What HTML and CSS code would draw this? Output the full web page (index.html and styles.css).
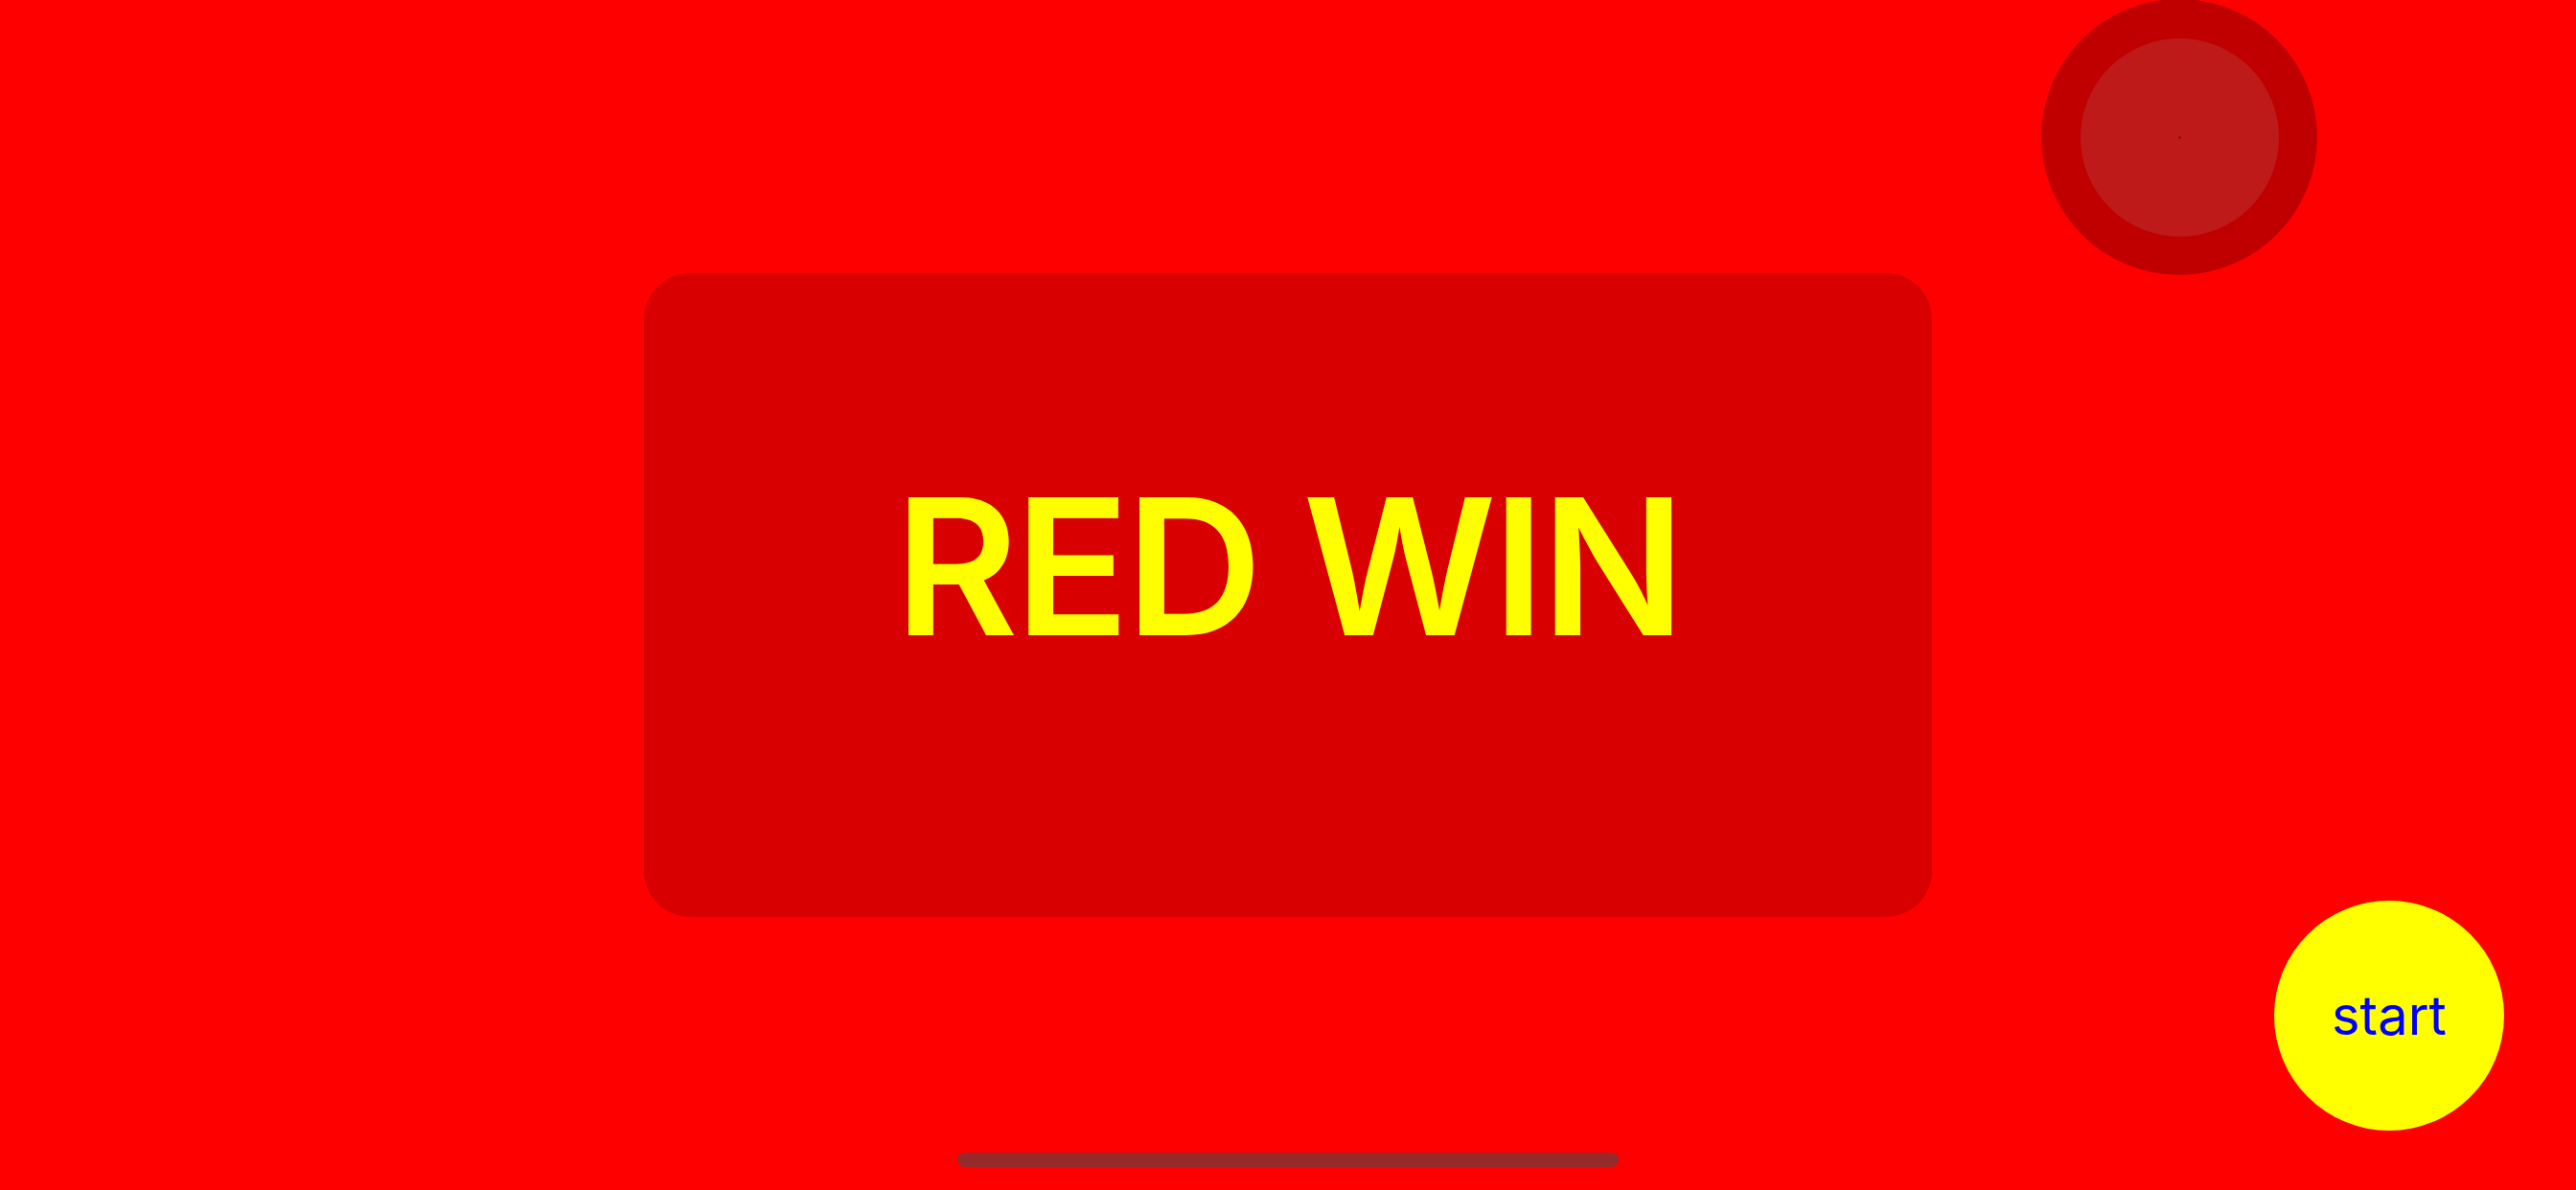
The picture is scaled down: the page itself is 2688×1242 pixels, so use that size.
FILE: index.html
```html
<!DOCTYPE html>
<html lang="en">
<head>
<meta charset="utf-8">
<title>RED WIN</title>
<link rel="stylesheet" href="styles.css">
</head>
<body>
<main class="screen">
  <section class="result-card">
    <h1 class="result-text">RED WIN</h1>
  </section>
  <div class="joystick">
    <div class="joystick-knob"><span class="joystick-dot"></span></div>
  </div>
  <button class="start-button" type="button">start</button>
  <div class="home-indicator"></div>
</main>
</body>
</html>
```
FILE: styles.css
```css
html, body {
  margin: 0;
  padding: 0;
  background: #ff0000;
}

.screen {
  position: relative;
  width: 2688px;
  height: 1242px;
  overflow: hidden;
  background: #ff0000;
  display: flex;
  align-items: center;
  justify-content: center;
  font-family: Inter, "Noto Sans", "Liberation Sans", sans-serif;
}

.result-card {
  width: 1344px;
  height: 672px;
  box-sizing: border-box;
  padding-bottom: 60px;
  border-radius: 48px;
  background: #d80000;
  display: flex;
  align-items: center;
  justify-content: center;
}

.result-text {
  margin: 0;
  font-size: 198px;
  line-height: 1;
  font-weight: 600;
  color: #ffff00;
  letter-spacing: -4px;
  white-space: nowrap;
}

.joystick {
  position: absolute;
  left: 2130px;
  top: -1px;
  width: 288px;
  height: 288px;
  border-radius: 50%;
  background: #c00000;
  display: flex;
  align-items: center;
  justify-content: center;
}

.joystick-knob {
  width: 207px;
  height: 207px;
  border-radius: 50%;
  background: #be1a1a;
  display: flex;
  align-items: center;
  justify-content: center;
}

.joystick-dot {
  width: 3px;
  height: 3px;
  border-radius: 50%;
  background: #8a1010;
}

.start-button {
  position: absolute;
  left: 2373px;
  top: 940px;
  width: 240px;
  height: 240px;
  border: none;
  border-radius: 50%;
  padding: 0;
  background: #ffff00;
  color: #0000ff;
  font-family: Inter, "Noto Sans", "Liberation Sans", sans-serif;
  font-size: 56px;
  font-weight: 400;
  line-height: 1;
  display: flex;
  align-items: center;
  justify-content: center;
}

.home-indicator {
  position: absolute;
  left: 999px;
  top: 1203px;
  width: 690px;
  height: 15px;
  border-radius: 8px;
  background: #962a2a;
}
```
